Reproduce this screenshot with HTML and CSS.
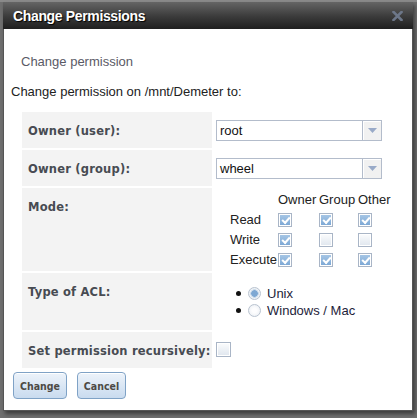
FILE: index.html
```html
<!DOCTYPE html>
<html>
<head>
<meta charset="utf-8">
<link rel="stylesheet" href="styles.css">
</head>
<body>
<div class="page-top"></div>
<div class="dialog">
  <div class="titlebar">
    <span class="title">Change Permissions</span>
    <svg class="close" width="11" height="10" viewBox="0 0 11 10"><path d="M1.5 1 L9.5 9 M9.5 1 L1.5 9" stroke="#6d7789" stroke-width="2.6" stroke-linecap="square"/></svg>
  </div>
  <div class="body">
    <div class="subtitle">Change permission</div>
    <p class="intro">Change permission on /mnt/Demeter to:</p>
    <table class="form">
      <tr class="r1">
        <th>Owner (user):</th>
        <td>
          <div class="select"><span class="val">root</span><span class="arrow"><svg width="9" height="5" viewBox="0 0 9 5"><path d="M0 0 H9 L4.5 5 Z" fill="#99aac8"/></svg></span></div>
        </td>
      </tr>
      <tr class="r2">
        <th>Owner (group):</th>
        <td>
          <div class="select"><span class="val">wheel</span><span class="arrow"><svg width="9" height="5" viewBox="0 0 9 5"><path d="M0 0 H9 L4.5 5 Z" fill="#99aac8"/></svg></span></div>
        </td>
      </tr>
      <tr class="r3">
        <th>Mode:</th>
        <td>
          <div class="mode">
            <span></span><span>Owner</span><span>Group</span><span>Other</span>
            <span>Read</span><span class="cb on"></span><span class="cb on"></span><span class="cb on"></span>
            <span>Write</span><span class="cb on"></span><span class="cb"></span><span class="cb"></span>
            <span>Execute</span><span class="cb on"></span><span class="cb on"></span><span class="cb on"></span>
          </div>
        </td>
      </tr>
      <tr class="r4">
        <th>Type of ACL:</th>
        <td>
          <ul class="acl">
            <li><span class="radio on"></span>Unix</li>
            <li><span class="radio"></span>Windows / Mac</li>
          </ul>
        </td>
      </tr>
      <tr class="r5">
        <th>Set permission recursively:</th>
        <td><span class="cb big"></span></td>
      </tr>
    </table>
    <div class="buttons">
      <button class="btn change">Change</button>
      <button class="btn cancel">Cancel</button>
    </div>
  </div>
</div>
</body>
</html>
```
FILE: styles.css
```css
html, body {
  margin: 0;
  padding: 0;
}
body {
  width: 417px;
  height: 418px;
  overflow: hidden;
  background: #6f6f6f;
  font-family: "Liberation Sans", Arial, sans-serif;
  font-size: 13px;
  color: #222;
}
.page-top {
  height: 2px;
  background: #8a8a8a;
}
.dialog {
  margin-left: 3px;
  width: 410px;
  box-shadow: 2px 3px 4px rgba(0,0,0,0.45);
}
.titlebar {
  height: 27px;
  background: linear-gradient(#656565, #3a3a3a 55%, #1f1f1f);
  display: flex;
  align-items: center;
  justify-content: space-between;
  padding: 0 10px 0 10px;
  box-sizing: border-box;
}
.title {
  color: #fff;
  font-family: "Liberation Sans", Arial, sans-serif;
  font-weight: bold;
  font-size: 14px;
  text-shadow: 1px 1px 1px #000;
  letter-spacing: -0.35px;
}
.close {
  display: block;
  margin-top: 1px;
}
.body {
  background: #fff;
  height: 382px;
  box-sizing: border-box;
  border-left: 1px solid #555;
  border-right: 1px solid #555;
  border-bottom: 1px solid #555;
  padding: 0;
}
.subtitle {
  color: #5a5a66;
  padding: 25px 0 0 17px;
  line-height: 16px;
}
.intro {
  margin: 14px 0 0 7px;
  line-height: 16px;
}
.form {
  border-collapse: separate;
  border-spacing: 2px;
  margin: 10px 0 0 16px;
  width: 392px;
}
.form th {
  background: #f3f3f3;
  width: 190px;
  box-sizing: border-box;
  text-align: left;
  vertical-align: top;
  padding: 13px 0 0 6px;
  font-family: "DejaVu Sans", sans-serif;
  font-weight: bold;
  font-size: 11.5px;
  letter-spacing: 0.2px;
  line-height: 12px;
  color: #474b52;
}
.form td {
  vertical-align: top;
  padding: 0;
}
.r1 th, .r1 td, .r2 th, .r2 td, .r5 th, .r5 td { height: 36px; }
.r3 th, .r3 td { height: 83px; }
.r4 th, .r4 td { height: 57px; }
.select {
  margin: 8px 0 0 2px;
  width: 166px;
  height: 21px;
  box-sizing: border-box;
  border: 1px solid #b3bccb;
  display: flex;
  background: #fff;
}
.select .val {
  flex: 1;
  padding-left: 3px;
  line-height: 19px;
  color: #111;
}
.select .arrow {
  width: 18px;
  border-left: 1px solid #b3bccb;
  background: #f1f1f1;
  box-shadow: inset 1px 1px 0 #fff;
  display: flex;
  align-items: center;
  justify-content: center;
}
.mode {
  display: grid;
  grid-template-columns: 48px 41px 39px auto;
  grid-auto-rows: 20px;
  align-items: center;
  margin: 2px 0 0 16px;
}
.mode span { line-height: 20px; }
.cb {
  display: inline-block;
  width: 14px;
  height: 14px;
  box-sizing: border-box;
  border: 1px solid #a9b5c6;
  background: linear-gradient(#fbfcfd, #dfe6ee);
  box-shadow: inset 0 0 0 1px #fff;
  position: relative;
}
.mode span.cb { line-height: 14px; }
.cb.on {
  background: linear-gradient(#a9c8e6, #7aa6d4);
}
.cb.on::after {
  content: "";
  position: absolute;
  left: 3px;
  top: 3px;
  width: 6px;
  height: 3px;
  border-left: 2px solid #fff;
  border-bottom: 2px solid #fff;
  transform: rotate(-48deg);
  transform-origin: 50% 50%;
}
.cb.big {
  width: 15px;
  height: 15px;
  margin: 10px 0 0 2px;
}
.acl {
  list-style: none;
  margin: 12px 0 0 22px;
  padding: 0;
}
.acl li {
  display: flex;
  align-items: center;
  height: 17px;
  color: #1d1d3a;
}
.acl li::before {
  content: "";
  width: 5px;
  height: 5px;
  border-radius: 50%;
  background: #111;
  margin-right: 7px;
}
.radio {
  width: 13px;
  height: 13px;
  box-sizing: border-box;
  border-radius: 50%;
  border: 1px solid #b9c3d0;
  background: radial-gradient(circle, #fdfdfe 30%, #e6ebf1 100%);
  margin-right: 6px;
  position: relative;
}
.radio.on {
  background: radial-gradient(circle, #7ea8d3 0 3px, #c8d9ea 3.5px 4px, #eef2f6 4.5px);
}
.buttons {
  display: flex;
  gap: 10px;
  margin: 2px 0 0 9px;
}
.btn {
  height: 27px;
  box-sizing: border-box;
  border: 1px solid #7fa2c6;
  border-radius: 4px;
  background: linear-gradient(#edf3fa, #c9dbef);
  box-shadow: inset 0 1px 0 #fff;
  font-family: "DejaVu Sans Condensed", "DejaVu Sans", sans-serif;
  font-weight: bold;
  font-size: 10.5px;
  color: #4d4a44;
  padding: 0;
}
.btn.change { width: 54px; }
.btn.cancel { width: 49px; }
```
